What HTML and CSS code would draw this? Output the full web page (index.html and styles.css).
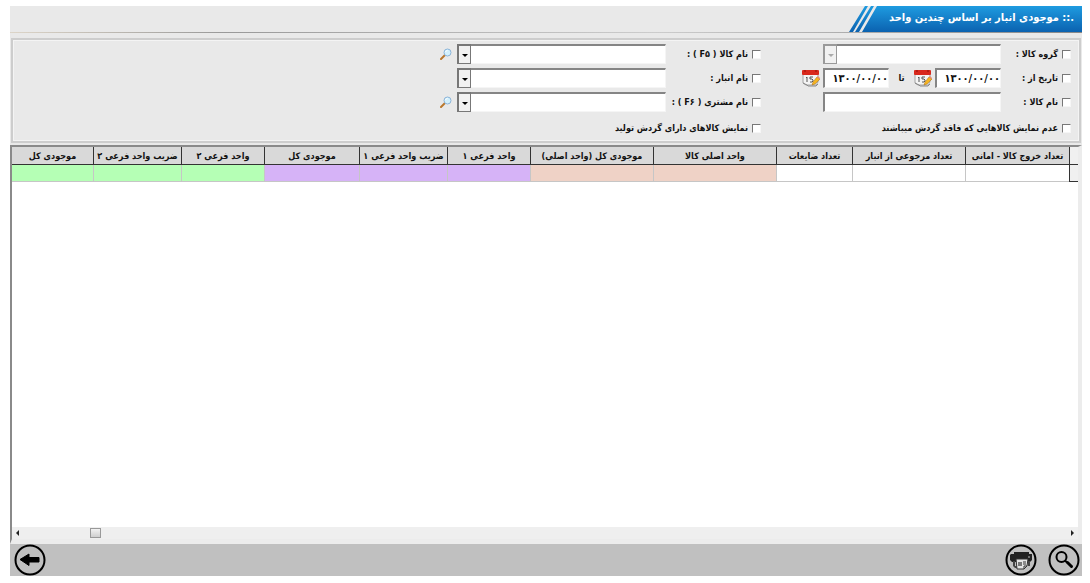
FILE: index.html
```html
<!DOCTYPE html>
<html lang="fa" dir="rtl">
<head>
    <meta charset="UTF-8">
    <meta name="viewport" content="width=device-width, initial-scale=1.0">
    <title>موجودی انبار بر اساس چندین واحد</title>
    <link rel="stylesheet" href="styles.css">
</head>
<body>
    <!-- shared icons -->
    <svg class="icon-defs" aria-hidden="true">
        <symbol id="icon-calendar" viewBox="0 0 18 18">
            <path d="M1 5h15v8l-2 3H4l-3-2z" fill="#f4f4f4" stroke="#a5a5a5"/>
            <path d="M1 14l4 2 1 1h8l2-2" fill="none" stroke="#888"/>
            <rect x="0" y="1" width="17" height="5" rx="1" fill="#d9281c"/>
            <path d="M2 2h2M13 2h2" stroke="#8e1009"/>
            <path d="M4 9l1-1v5M11 8H8v2h2l1 1v1l-1 1H8" fill="none" stroke="#555"/>
            <path d="M15 8l3 2-5 5-3 1 1-3z" fill="#f5b521" stroke="#a8690c" stroke-width=".5"/>
            <path d="M15 8l1-1 2 2-1 1z" fill="#e98b78"/>
        </symbol>
        <symbol id="icon-lookup" viewBox="0 0 12 12">
            <path d="M1 11l4-4" stroke="#b9772c" stroke-width="2" stroke-linecap="round"/>
            <circle cx="7.5" cy="4.500" r="3.500" fill="#d3f0fc" stroke="#8bb4d8"/>
            <path d="M5.500 4a2 2 0 0 1 2-1.500" fill="none" stroke="#fff"/>
        </symbol>
    </svg>

    <header class="title-bar">
        <svg class="title-stripes" viewBox="0 0 30 26" aria-hidden="true">
            <defs>
                <linearGradient id="stripe" x1="0" y1="0" x2="0" y2="1">
                    <stop offset="0" stop-color="#1e9be0"/>
                    <stop offset="1" stop-color="#0b62b0"/>
                </linearGradient>
            </defs>
            <path d="M16 0h3L4 26H0zM22 0h3L10 26H6zM28 0h2v26H13z" fill="url(#stripe)"/>
        </svg>
        <h1>.:: موجودی انبار بر اساس چندین واحد</h1>
    </header>

    <form class="filters">
        <div class="filter-column first">
            <div class="field">
                <label><input type="checkbox"> گروه کالا :</label>
                <span class="combo disabled"><select aria-label="گروه کالا" disabled><option></option></select></span>
            </div>
            <div class="field">
                <label><input type="checkbox"> تاریخ از :</label>
                <input type="text" class="date" dir="ltr" value="۱۳۰۰/۰۰/۰۰" aria-label="تاریخ از">
                <button type="button" class="icon-button" aria-label="تقویم"><svg class="calendar"><use href="#icon-calendar"/></svg></button>
                <label class="until" for="dateTo">تا</label>
                <input type="text" class="date" id="dateTo" dir="ltr" value="۱۳۰۰/۰۰/۰۰">
                <button type="button" class="icon-button" aria-label="تقویم"><svg class="calendar"><use href="#icon-calendar"/></svg></button>
            </div>
            <div class="field">
                <label><input type="checkbox"> نام کالا :</label>
                <input type="text" class="item-name" aria-label="نام کالا">
            </div>
            <div class="field wide">
                <label><input type="checkbox"> عدم نمایش کالاهایی که فاقد گردش میباشند</label>
            </div>
        </div>

        <div class="filter-column second">
            <div class="field">
                <label><input type="checkbox"> نام کالا ( F۵ ) :</label>
                <span class="combo"><select aria-label="نام کالا"><option></option></select></span>
                <button type="button" class="icon-button lookup" aria-label="جستجو"><svg><use href="#icon-lookup"/></svg></button>
            </div>
            <div class="field">
                <label><input type="checkbox"> نام انبار :</label>
                <span class="combo"><select aria-label="نام انبار"><option></option></select></span>
            </div>
            <div class="field">
                <label><input type="checkbox"> نام مشتری ( F۶ ) :</label>
                <span class="combo"><select aria-label="نام مشتری"><option></option></select></span>
                <button type="button" class="icon-button lookup" aria-label="جستجو"><svg><use href="#icon-lookup"/></svg></button>
            </div>
            <div class="field wide">
                <label><input type="checkbox"> نمایش کالاهای دارای گردش تولید</label>
            </div>
        </div>
    </form>

    <main class="grid">
        <table>
            <colgroup>
                <col class="w-marker">
                <col class="w-consigned">
                <col class="w-returned">
                <col class="w-waste">
                <col class="w-main">
                <col class="w-main">
                <col class="w-unit">
                <col class="w-factor">
                <col class="w-total">
                <col class="w-unit">
                <col class="w-factor">
                <col>
            </colgroup>
            <thead>
                <tr>
                    <th class="marker"></th>
                    <th>تعداد خروج کالا - امانی</th>
                    <th>تعداد مرجوعی از انبار</th>
                    <th>تعداد ضایعات</th>
                    <th>واحد اصلی کالا</th>
                    <th>موجودی کل (واحد اصلی)</th>
                    <th>واحد فرعی ۱</th>
                    <th>ضریب واحد فرعی ۱</th>
                    <th>موجودی کل</th>
                    <th>واحد فرعی ۲</th>
                    <th>ضریب واحد فرعی ۲</th>
                    <th>موجودی کل</th>
                </tr>
            </thead>
            <tbody>
                <tr>
                    <td class="marker"></td>
                    <td></td>
                    <td></td>
                    <td></td>
                    <td class="main-unit"></td>
                    <td class="main-unit"></td>
                    <td class="unit-1"></td>
                    <td class="unit-1"></td>
                    <td class="unit-1"></td>
                    <td class="unit-2"></td>
                    <td class="unit-2"></td>
                    <td class="unit-2"></td>
                </tr>
            </tbody>
        </table>
        <div class="scrollbar" dir="ltr">
            <span class="arrow left"></span>
            <span class="thumb"></span>
            <span class="arrow right"></span>
        </div>
    </main>

    <footer class="toolbar">
        <button type="button" aria-label="جستجو">
            <svg viewBox="0 0 32 32">
                <circle cx="16" cy="16" r="14.500" fill="none" stroke="#000" stroke-width="2"/>
                <circle cx="13.500" cy="13" r="5" fill="none" stroke="#000" stroke-width="2"/>
                <path d="M17 16.500l2 2" stroke="#000" stroke-width="2"/>
                <path d="M19.500 18.500l4 4" stroke="#000" stroke-width="3" stroke-linecap="round"/>
            </svg>
        </button>
        <button type="button" aria-label="چاپ">
            <svg viewBox="0 0 32 32">
                <circle cx="16" cy="16" r="14.500" fill="none" stroke="#000" stroke-width="2"/>
                <rect x="9" y="8" width="15" height="2" fill="#222"/>
                <path d="M6 10h21v6l-2 2H7l-2-2v-5z" fill="#222"/>
                <path d="M8 17h2v5h2v2H10l-2-2zM23 17h2v5h-2z" fill="#444"/>
                <path d="M11 15h12l-1 7-3 3h-7z" fill="#e4e4e4" stroke="#333"/>
                <path d="M13 18h4v4h-4z" fill="#777"/>
                <path d="M18 18h3M18 20h3M19 25v-3h3" stroke="#333" fill="none"/>
                <path d="M23 13h2" stroke="#bbb"/>
            </svg>
        </button>
        <button type="button" class="back" aria-label="بازگشت">
            <svg viewBox="0 0 32 32">
                <circle cx="16" cy="16" r="14.500" fill="none" stroke="#000" stroke-width="2"/>
                <path d="M6 15.500L15 10v3.500h10v4.500H15v3.500z" fill="#000" stroke="#000" stroke-linejoin="round"/>
            </svg>
        </button>
    </footer>
</body>
</html>
```
FILE: styles.css
```css
*,
*::before,
*::after {
    margin: 0;
    padding: 0;
    box-sizing: border-box;
}

html {
    background: #fff;
}

body {
    display: flex;
    flex-direction: column;
    min-height: calc(100vh - 13px);
    margin: 6px 8px 7px 10px;
    background: #e9e9e9;
    color: #111;
    font-family: "DejaVu Sans Condensed", "DejaVu Sans", sans-serif;
    font-size: 9px;
    font-weight: bold;
}

input,
select,
button {
    font: inherit;
    color: inherit;
    border-radius: 0;
}

.icon-defs {
    position: absolute;
    width: 0;
    height: 0;
}

/* title */
.title-bar {
    display: flex;
    flex-direction: row-reverse;
    justify-content: flex-end;
    height: 27px;
    border-bottom: 1px solid #aaa;
    border-image: linear-gradient(to right, #ddd5c8, #999 20%, #ccc 60%, #888) 1;
}

.title-stripes {
    width: 30px;
    height: 26px;
}

.title-bar h1 {
    width: 203px;
    padding-right: 8px;
    background: linear-gradient(#1e9be0, #0b62b0);
    color: #fff;
    font-size: 11px;
    line-height: 24px;
    white-space: nowrap;
}

/* filters */
.filters {
    display: flex;
    margin: 5px 1px 0;
    padding: 4px 8px 3px;
    border: 2px solid #cdcdcd;
    box-shadow: inset 0 0 0 1px #f4f4f4;
}

.filter-column {
    display: flex;
    flex-direction: column;
    gap: 4px;
}

.filter-column.first {
    width: 310px;
}

.field {
    display: flex;
    align-items: center;
    height: 20px;
}

.field label {
    display: flex;
    align-items: center;
    gap: 4px;
    flex-shrink: 0;
    white-space: nowrap;
}

.first .field label {
    width: 70px;
}

.second .field label {
    width: 95px;
}

.filters .field.wide {
    margin-top: 2px;
}

.filters .field.wide label {
    width: auto;
}

.first .field .until {
    width: 25px;
    justify-content: center;
}

input[type="checkbox"] {
    appearance: none;
    flex-shrink: 0;
    width: 9px;
    height: 9px;
    background: #fff;
    border: 1px solid #f6f6f6;
    border-top-color: #777;
    border-left-color: #777;
}

input[type="text"],
.combo select {
    height: 20px;
    background: #fff;
    border: 1px solid #f5f5f5;
    border-top: 2px solid #858585;
    border-left: 2px solid #858585;
}

input.date {
    width: 66px;
    font-size: 11px;
    text-align: right;
}

input.item-name {
    width: 178px;
}

.combo {
    position: relative;
    width: 209px;
    height: 20px;
}

.combo.disabled {
    width: 178px;
}

.combo select {
    appearance: none;
    width: 100%;
    display: block;
    opacity: 1;
}

.combo::before {
    content: "";
    position: absolute;
    top: 0;
    left: 0;
    width: 14px;
    height: 20px;
    background: #f1f1f1;
    border: 1px solid #777;
    border-top-width: 2px;
    border-left-width: 2px;
    pointer-events: none;
}

.combo.disabled::before {
    border-color: #999;
}

.combo::before,
.combo::after {
    z-index: 1;
}

.combo::after {
    content: "";
    position: absolute;
    top: 10px;
    left: 5px;
    border: 3px solid transparent;
    border-top-color: #000;
    border-bottom: 0;
    pointer-events: none;
}

.combo.disabled::after {
    border-top-color: #aaa;
}

.icon-button {
    background: none;
    border: none;
    cursor: pointer;
    margin-right: 3px;
}

.icon-button svg {
    display: block;
    width: 12px;
    height: 12px;
}

.icon-button .calendar {
    width: 18px;
    height: 18px;
}

.icon-button.lookup {
    margin-right: 5px;
}

/* stock table */
.grid {
    display: flex;
    flex-direction: column;
    justify-content: space-between;
    flex: 1;
    margin-top: 2px;
    background: #fff;
    border-top: 2px solid #8a8a8a;
    border-left: 2px solid #8a8a8a;
    border-right: 4px solid #ececec;
    border-bottom: 5px solid #ececec;
}

table {
    width: 100%;
    table-layout: fixed;
    border-collapse: separate;
    border-spacing: 0;
}

th {
    height: 18px;
    background: #d9d9d9;
    border-left: 1px solid #333;
    border-bottom: 1px solid #333;
    font-size: 9px;
    line-height: 16px;
    white-space: nowrap;
    overflow: hidden;
}

td {
    height: 17px;
    border-left: 1px solid #c6c6c6;
    border-bottom: 1px solid #c6c6c6;
}

th:last-child,
td:last-child {
    border-left: none;
}

.marker {
    background: #f0f0f0;
    border-left: 1px solid #333;
    border-bottom: 1px solid #333;
}

.main-unit {
    background: #efd2c6;
}

.unit-1 {
    background: #d6b3f7;
}

.unit-2 {
    background: #b5ffb5;
}

.w-marker {
    width: 9px;
}

.w-consigned {
    width: 104px;
}

.w-returned {
    width: 113px;
}

.w-waste {
    width: 76px;
}

.w-main {
    width: 123px;
}

.w-unit {
    width: 83px;
}

.w-factor {
    width: 88px;
}

.w-total {
    width: 95px;
}

.scrollbar {
    display: flex;
    align-items: center;
    height: 12px;
    padding: 0 4px;
    background: #efefef;
}

.thumb {
    width: 11px;
    height: 10px;
    margin-left: 71px;
    background: linear-gradient(#f2f2f2, #cfcfcf);
    border: 1px solid #999;
}

.arrow {
    border: 3px solid transparent;
}

.arrow.left {
    border-left: 0;
    border-right-color: #222;
}

.arrow.right {
    margin-left: auto;
    border-right: 0;
    border-left-color: #222;
}

/* bottom buttons */
.toolbar {
    display: flex;
    align-items: center;
    gap: 11px;
    height: 32px;
    padding: 0 2px 0 4px;
    background: #c0c0c0;
}

.toolbar button {
    background: none;
    border: none;
    cursor: pointer;
}

.toolbar svg {
    display: block;
    width: 32px;
    height: 32px;
}

.toolbar .back {
    margin-right: auto;
}
```
